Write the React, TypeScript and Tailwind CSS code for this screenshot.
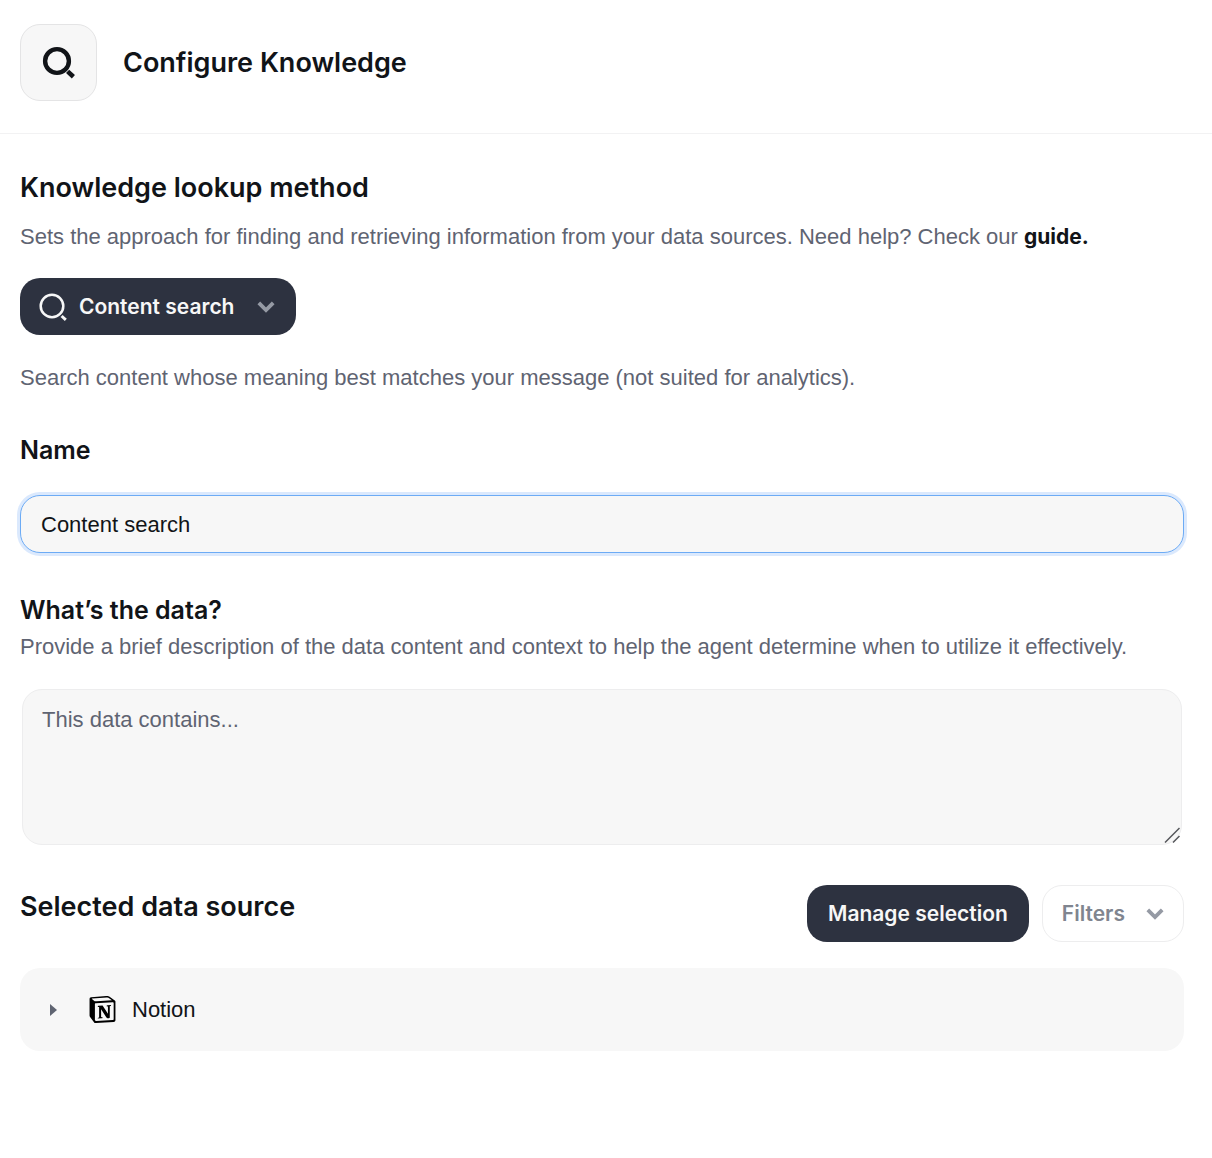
import { useState } from "react";
import { SiNotion } from "react-icons/si";

function SearchGlyph({ bold = false }: { bold?: boolean }) {
  return bold ? (
    <svg viewBox="0 0 34 34" className="size-[34px]" fill="none" stroke="currentColor" aria-hidden="true">
      <circle cx="15" cy="15" r="11.9" strokeWidth="4.4" />
      <path d="M25.6 25.4 31.4 30.8" strokeWidth="4.6" />
    </svg>
  ) : (
    <svg viewBox="0 0 28 28" className="size-7" fill="none" stroke="currentColor" aria-hidden="true">
      <circle cx="13" cy="13" r="11.3" strokeWidth="2.5" />
      <path d="M22.6 23 26.8 26.8" strokeWidth="3" />
    </svg>
  );
}

function Chevron() {
  return (
    <svg viewBox="0 0 18 12" className="h-3 w-[18px] text-[#959aa4]" fill="none" stroke="currentColor" strokeWidth="3.8" aria-hidden="true">
      <path d="M1.8 1.8 9 9 16.2 1.8" />
    </svg>
  );
}

export default function App() {
  const [name, setName] = useState("Content search");
  const [description, setDescription] = useState("");

  return (
    <div className="min-h-screen bg-white font-['Liberation_Sans',sans-serif] text-[22px] leading-8 text-[#111418]">
      <header className="flex items-center gap-[26px] border-b border-[#f2f2f3] px-5 pt-6 pb-8">
        <div className="flex size-[77px] items-center justify-center rounded-[20px] border border-[#e4e4e5] bg-[#f7f7f7]">
          <SearchGlyph bold />
        </div>
        <h1 className="font-['Inter',sans-serif] text-[27px] font-semibold">Configure Knowledge</h1>
      </header>

      <main className="pt-9 pr-7 pb-10 pl-5">
        <section>
          <h2 className="font-['Inter',sans-serif] text-[27px] leading-9 font-semibold">Knowledge lookup method</h2>
          <p className="mt-[15px] text-[#5f6472]">
            Sets the approach for finding and retrieving information from your data sources. Need help? Check our{" "}
            <a href="#guide" className="font-['Inter',sans-serif] text-[21px] font-bold text-[#111418]">guide.</a>
          </p>
          <button type="button" className="mt-[25px] flex h-[57px] items-center rounded-[20px] bg-[#2d3240] pr-[21px] pl-[19px] font-['Inter',sans-serif] text-[21px] font-semibold text-[#f7f7f7]">
            <SearchGlyph />
            <span className="mr-[23px] ml-3">Content search</span>
            <Chevron />
          </button>
          <p className="mt-[27px] text-[#5f6472]">
            Search content whose meaning best matches your message (not suited for analytics).
          </p>
        </section>

        <section className="mt-10">
          <label htmlFor="name" className="block font-['Inter',sans-serif] text-[25px] font-semibold">Name</label>
          <input
            id="name"
            value={name}
            onChange={(e) => setName(e.target.value)}
            className="mt-[29px] block h-[58px] w-full rounded-[20px] border border-[#6cabf5] bg-[#f7f7f7] px-5 pt-0.5 ring-3 ring-[#dbe9fd] outline-none"
          />
        </section>

        <section className="mt-[41px]">
          <label htmlFor="description" className="block font-['Inter',sans-serif] text-[25px] font-semibold">What’s the data?</label>
          <p id="description-help" className="mt-[5px] text-[#5f6472]">
            Provide a brief description of the data content and context to help the agent determine when to utilize it effectively.
          </p>
          <div className="relative mx-0.5 mt-[26px]">
            <textarea
              id="description"
              aria-describedby="description-help"
              value={description}
              onChange={(e) => setDescription(e.target.value)}
              placeholder="This data contains..."
              className="block h-[156px] w-full resize-none rounded-[20px] border border-[#ededee] bg-[#f7f7f7] px-[19px] py-3.5 outline-none placeholder:text-[#5f6472]"
            />
            <svg viewBox="0 0 16 16" className="pointer-events-none absolute right-0.5 bottom-0.5 size-4 text-[#55575b]" fill="none" stroke="currentColor" strokeWidth="1.5" aria-hidden="true">
              <path d="M1 15.5 15.5 1M9 15.5 15.5 9" />
            </svg>
          </div>
        </section>

        <section className="mt-10">
          <div className="flex items-start justify-between">
            <h2 className="mt-1 font-['Inter',sans-serif] text-[27px] leading-9 font-semibold">Selected data source</h2>
            <div className="flex gap-[13px] font-['Inter',sans-serif] text-[21px] font-semibold">
              <button type="button" className="h-[57px] rounded-[20px] bg-[#2d3240] px-[21px] text-[#f7f7f7]">Manage selection</button>
              <button type="button" className="flex h-[57px] items-center gap-[21px] rounded-[20px] border border-[#ededee] px-[19px] text-[#80858f]">
                Filters
                <Chevron />
              </button>
            </div>
          </div>
          <button type="button" className="mt-[26px] flex h-[83px] w-full items-center rounded-[20px] bg-[#f7f7f7] pl-[30px]">
            <svg viewBox="0 0 7 12" className="h-3 w-[7px] text-[#5f6472]" fill="currentColor" aria-hidden="true">
              <path d="M0 0 7 6 0 12Z" />
            </svg>
            <SiNotion className="mr-4 ml-8 size-[27px] text-black" aria-hidden="true" />
            Notion
          </button>
        </section>
      </main>
    </div>
  );
}
